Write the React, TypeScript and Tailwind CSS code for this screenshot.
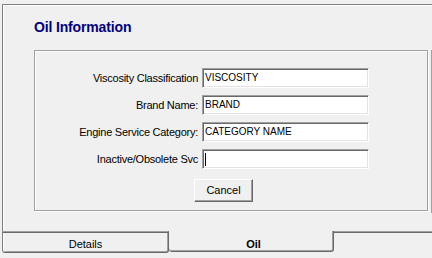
export default function App() {
  const rows: { label: string; value: string; caret?: boolean }[] = [
    { label: "Viscosity Classification", value: "VISCOSITY" },
    { label: "Brand Name:", value: "BRAND" },
    { label: "Engine Service Category:", value: "CATEGORY NAME" },
    { label: "Inactive/Obsolete Svc", value: "", caret: true },
  ];
  return (
    <div className="w-[432px] h-[258px] bg-[#f0f0f0] overflow-hidden font-['Liberation_Sans',Arial,sans-serif] text-black flex flex-col">
      <div className="mt-[4px] ml-[2px] h-[227px] border-t border-l border-[#808080] shadow-[inset_1px_1px_0_#fff] flex flex-col">
        <div className="mt-[14px] ml-[31px] text-[14px] leading-[16px] font-bold text-[#000080] tracking-[-0.15px]">
          Oil Information
        </div>
        <div className="mt-[15px] ml-[31px] flex items-start">
          <div className="w-[394px] h-[161px] border border-[#a0a0a0] shadow-[inset_1px_1px_0_#fff,1px_1px_0_#fff] pt-[17px] flex flex-col">
            <div className="flex flex-col gap-[7px]">
              {rows.map((r) => (
                <div key={r.label} className="flex items-center h-[20px]">
                  <div className="w-[163px] text-right text-[11px] leading-[20px] tracking-[-0.25px] whitespace-nowrap">
                    {r.label}
                  </div>
                  <div className="ml-[4px] w-[167px] h-[20px] bg-white border border-t-[#a0a0a0] border-l-[#a0a0a0] border-b-white border-r-white shadow-[inset_1px_1px_0_#696969,inset_-1px_-1px_0_#e3e3e3] pl-[2px] flex items-center text-[10px] leading-[16px] whitespace-nowrap">
                    {r.caret ? <div className="w-px h-[13px] bg-black" /> : r.value}
                  </div>
                </div>
              ))}
            </div>
            <div className="ml-[159px] mt-[10px] w-[59px] h-[23px] border border-t-white border-l-white border-b-[#696969] border-r-[#696969] shadow-[inset_-1px_-1px_0_#a0a0a0] text-[11px] leading-[13px] flex items-center justify-center">
              Cancel
            </div>
          </div>
          <div className="ml-[3px] w-px h-[163px] bg-[#a0a0a0]" />
        </div>
      </div>
      <div className="flex items-start h-[27px]">
        <div className="ml-[2px] w-[167px] h-[22px] border-t border-l border-r border-b border-t-[#a0a0a0] border-l-[#808080] border-r-[#696969] border-b-[#696969] rounded-b-[3px] shadow-[inset_0_1px_0_#696969,inset_1px_0_0_#fff,inset_-1px_0_0_#a0a0a0,inset_0_-1px_0_#a0a0a0] flex justify-center pt-[6px] text-[11px] leading-[13px]">
          Details
        </div>
        <div className="w-[165px] h-[21px] border-r border-b border-r-[#696969] border-b-[#696969] rounded-b-[3px] shadow-[inset_-1px_0_0_#a0a0a0,inset_0_-1px_0_#a0a0a0] flex justify-center pl-[5px] pt-[7px] text-[11px] leading-[13px] font-bold">
          Oil
        </div>
        <div className="flex-1 h-[2px] border-t border-t-[#a0a0a0] shadow-[inset_0_1px_0_#696969]" />
      </div>
    </div>
  );
}
